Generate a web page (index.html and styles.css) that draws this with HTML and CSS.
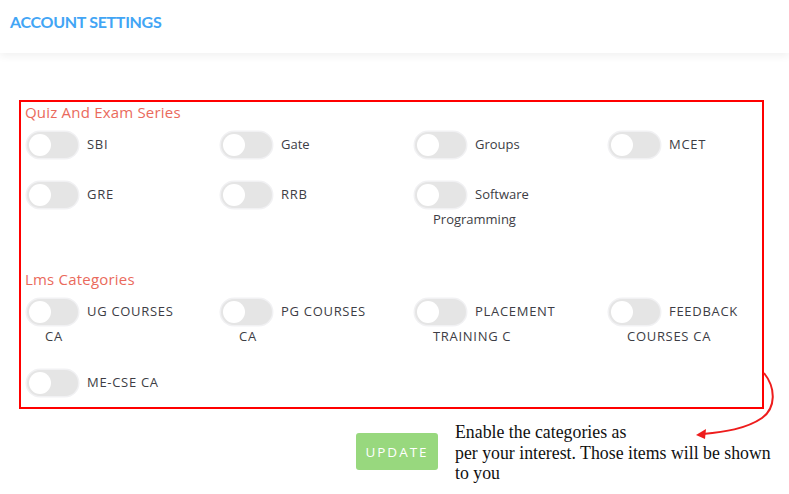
FILE: index.html
```html
<!DOCTYPE html>
<html>
<head>
<meta charset="utf-8">
<link rel="stylesheet" href="styles.css">
</head>
<body>
<header class="topbar">
  <h1 class="title">ACCOUNT SETTINGS</h1>
</header>
<main class="page">
  <section class="panel">
    <h2 class="group-title">Quiz And Exam Series</h2>
    <div class="grid">
      <label class="item caps"><span class="toggle"><span class="knob"></span></span>SBI</label>
      <label class="item"><span class="toggle"><span class="knob"></span></span>Gate</label>
      <label class="item"><span class="toggle"><span class="knob"></span></span>Groups</label>
      <label class="item caps"><span class="toggle"><span class="knob"></span></span>MCET</label>
      <label class="item caps"><span class="toggle"><span class="knob"></span></span>GRE</label>
      <label class="item caps"><span class="toggle"><span class="knob"></span></span>RRB</label>
      <label class="item"><span class="toggle"><span class="knob"></span></span>Software Programming</label>
    </div>
    <h2 class="group-title lms">Lms Categories</h2>
    <div class="grid">
      <label class="item caps"><span class="toggle"><span class="knob"></span></span>UG COURSES CA</label>
      <label class="item caps"><span class="toggle"><span class="knob"></span></span>PG COURSES CA</label>
      <label class="item caps"><span class="toggle"><span class="knob"></span></span>PLACEMENT TRAINING C</label>
      <label class="item caps"><span class="toggle"><span class="knob"></span></span>FEEDBACK COURSES CA</label>
      <label class="item caps"><span class="toggle"><span class="knob"></span></span>ME-CSE CA</label>
    </div>
  </section>
  <div class="actions">
    <button class="update">UPDATE</button>
    <p class="note">Enable the categories as<br>per your interest. Those items will be shown to you</p>
  </div>
  <svg class="arrow" width="789" height="494" viewBox="0 0 789 494">
    <path d="M764 373 C776 388, 776 408, 762 418 C746 429, 724 432, 703 434" fill="none" stroke="#ee1c1c" stroke-width="2"/>
    <polygon points="696,435 706,429 705,439" fill="#ee1c1c"/>
  </svg>
</main>
</body>
</html>
```
FILE: styles.css
```css
* { box-sizing: border-box; }
html, body { margin: 0; padding: 0; background: #fff; }
body {
  font-family: "Open Sans", "Liberation Sans", sans-serif;
  width: 789px;
  height: 494px;
  overflow: hidden;
  position: relative;
}
.topbar {
  height: 53px;
  background: #fff;
  box-shadow: 0 3px 8px rgba(0,0,0,0.06);
  padding: 12px 10px 0;
}
.title {
  margin: 0;
  font-family: "Lato", "Liberation Sans", sans-serif;
  font-weight: 700;
  font-size: 16px;
  line-height: 20px;
  color: #42a5f5;
  letter-spacing: -0.3px;
}
.page { padding: 47px 0 0 19px; }
.panel {
  width: 745px;
  height: 309px;
  border: 2px solid #f00;
  padding: 0 4px 0 4px;
}
.group-title {
  margin: 0;
  font-weight: 400;
  font-size: 15px;
  line-height: 20px;
  letter-spacing: 0.2px;
  color: #ea6a5c;
}
.group-title.lms { margin-top: 39px; }
.grid {
  display: grid;
  grid-template-columns: repeat(4, 194px);
  row-gap: 24px;
  margin: 11px 0 0 2px;
}
.item {
  display: block;
  padding: 0 30px 0 18px;
  text-indent: -18px;
  font-size: 13px;
  line-height: 21px;
  color: #3d3d45;
}
.item.caps { letter-spacing: 0.7px; }
.toggle {
  display: inline-block;
  vertical-align: middle;
  position: relative;
  width: 51px;
  height: 26px;
  border-radius: 13px;
  background: #e5e5e5;
  box-shadow: 0 0 0 1.5px #f1f1f3;
  margin-right: 9px;
  text-indent: 0;
  top: -1px;
}
.knob {
  position: absolute;
  left: 2px;
  top: 2px;
  width: 22px;
  height: 22px;
  border-radius: 50%;
  background: #fff;
}
.actions {
  display: flex;
  align-items: flex-start;
  margin: 13px 0 0 337px;
}
.update {
  margin-top: 11px;
  width: 82px;
  height: 37px;
  border: 0;
  border-radius: 3px;
  background: #98d87e;
  color: #fff;
  font-family: "Open Sans", "Liberation Sans", sans-serif;
  font-size: 13.5px;
  letter-spacing: 2px;
  padding: 0;
}
.note {
  margin: 0 0 0 17px;
  width: 325px;
  font-family: "Liberation Serif", serif;
  font-size: 17.8px;
  line-height: 20.5px;
  color: #111;
}
.arrow {
  position: absolute;
  left: 0;
  top: 0;
  pointer-events: none;
}
```
